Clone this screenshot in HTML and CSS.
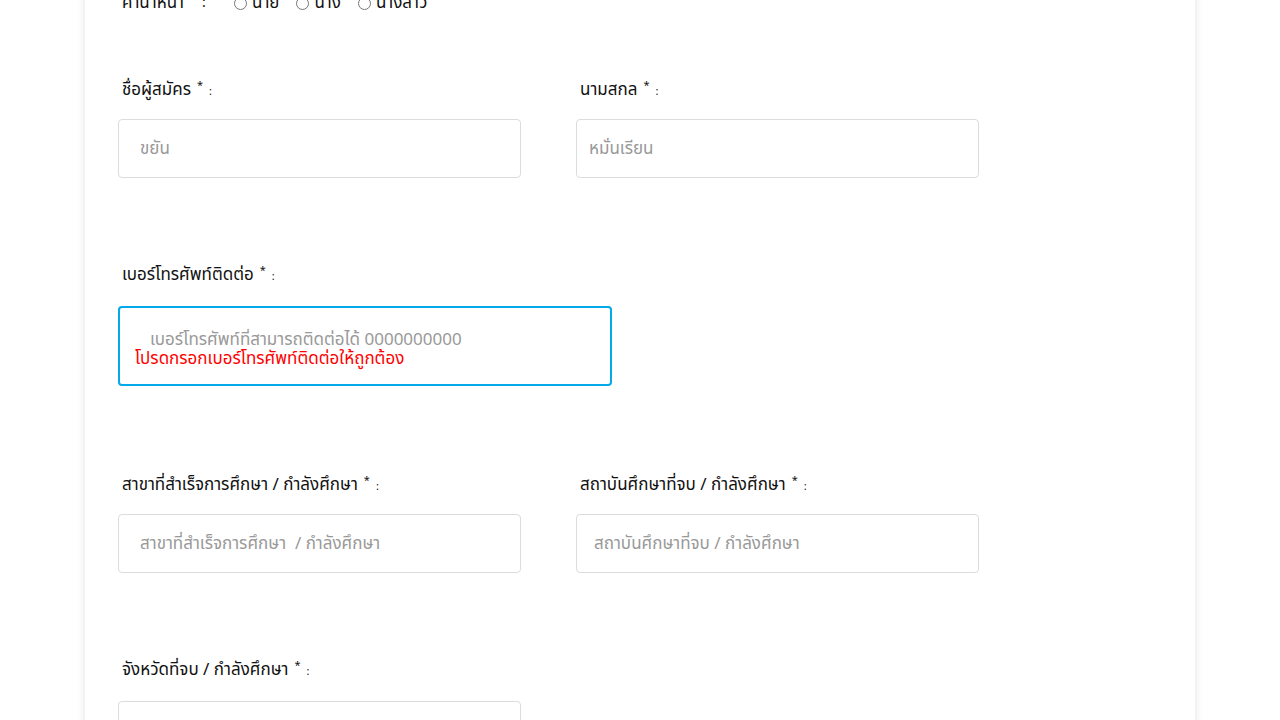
FILE: index.html
```html
<!DOCTYPE html>
<html lang="th">
<head>
<meta charset="utf-8">
<title>ใบสมัคร</title>
<link rel="stylesheet" href="styles.css">
</head>
<body>
<div class="card">
  <div class="title-row">
    <span class="title-label">คำนำหน้า</span>
    <span class="colon">:</span>
    <label class="radio"><input type="radio" name="t"> นาย</label>
    <label class="radio"><input type="radio" name="t"> นาง</label>
    <label class="radio"><input type="radio" name="t"> นางสาว</label>
  </div>

  <div class="row row-first">
    <div class="field">
      <label class="lbl">ชื่อผู้สมัคร<sup>*</sup><small>:</small></label>
      <input class="inp pad-22" type="text" placeholder="ขยัน">
    </div>
    <div class="field">
      <label class="lbl">นามสกล<sup>*</sup><small>:</small></label>
      <input class="inp pad-12" type="text" placeholder="หมั่นเรียน">
    </div>
  </div>

  <div class="row">
    <div class="field field-wide">
      <label class="lbl lbl-tall">เบอร์โทรศัพท์ติดต่อ<sup>*</sup><small>:</small></label>
      <div class="phone-box">
        <input class="phone-inp" type="text" placeholder="เบอร์โทรศัพท์ที่สามารถติดต่อได้ 0000000000">
        <div class="err">โปรดกรอกเบอร์โทรศัพท์ติดต่อให้ถูกต้อง</div>
      </div>
    </div>
  </div>

  <div class="row row-after-phone">
    <div class="field">
      <label class="lbl">สาขาที่สำเร็จการศึกษา / กำลังศึกษา<sup>*</sup><small>:</small></label>
      <input class="inp pad-22" type="text" placeholder="สาขาที่สำเร็จการศึกษา  / กำลังศึกษา">
    </div>
    <div class="field">
      <label class="lbl">สถาบันศึกษาที่จบ / กำลังศึกษา<sup>*</sup><small>:</small></label>
      <input class="inp pad-17" type="text" placeholder="สถาบันศึกษาที่จบ / กำลังศึกษา">
    </div>
  </div>

  <div class="row">
    <div class="field">
      <label class="lbl lbl-tall">จังหวัดที่จบ / กำลังศึกษา<sup>*</sup><small>:</small></label>
      <input class="inp pad-22" type="text">
    </div>
  </div>
</div>
</body>
</html>
```

FILE: styles.css
```css
html, body {
  margin: 0;
  padding: 0;
  background: #fff;
  overflow: hidden;
}
body {
  font-family: "Noto Sans Thai", "Noto Sans", "Open Sans", sans-serif;
  color: #111;
  font-size: 17px;
}
.card {
  width: 1110px;
  margin: 0 auto;
  min-height: 760px;
  background: #fff;
  box-shadow: 0 0 8px rgba(0, 0, 0, 0.12);
  padding: 0 0 0 33px;
  box-sizing: border-box;
}
.title-row {
  display: flex;
  align-items: center;
  height: 24px;
  margin-top: -9px;
  padding-left: 4px;
  line-height: 24px;
}
.title-label { width: 80px; }
.colon { width: 32px; font-size: 14px; }
.radio {
  display: inline-flex;
  align-items: center;
  margin-right: 17px;
}
.radio input {
  margin: 0 5px 0 0;
  width: 13px;
  height: 13px;
}
.row {
  display: grid;
  grid-template-columns: 403px 403px;
  column-gap: 55px;
  margin-top: 83px;
}
.row-first { margin-top: 61px; }
.row-after-phone { margin-top: 85px; }
.field { display: flex; flex-direction: column; }
.field-wide { grid-column: 1 / span 2; }
.lbl {
  display: block;
  height: 28px;
  line-height: 28px;
  padding-left: 4px;
  margin-bottom: 15px;
  font-size: 17px;
}
.lbl-tall { margin-bottom: 17px; }
.lbl sup {
  font-size: 11px;
  vertical-align: 6px;
  line-height: 0;
  margin-left: 6px;
}
.lbl small {
  font-size: 11px;
  line-height: 0;
  margin-left: 6px;
}
.inp {
  box-sizing: border-box;
  height: 59px;
  width: 403px;
  border: 1px solid #dcdcdc;
  border-radius: 4px;
  font-family: inherit;
  font-size: 17px;
  color: #333;
  outline: none;
  padding: 0 12px;
}
.inp::placeholder { color: #999; }
.pad-22 { padding-left: 21px; }
.pad-12 { padding-left: 12px; }
.pad-17 { padding-left: 17px; }
.phone-box {
  box-sizing: border-box;
  width: 494px;
  height: 80px;
  border: 2px solid #03a9e8;
  border-radius: 4px;
  padding: 21px 15px 0 15px;
}
.phone-inp {
  display: block;
  border: none;
  outline: none;
  padding: 0 0 0 15px;
  margin: 0;
  height: 21px;
  width: 100%;
  font-family: inherit;
  font-size: 17px;
}
.phone-inp::placeholder { color: #999; }
.err {
  color: #ff0000;
  font-size: 17px;
  line-height: 20px;
  margin-top: -1px;
}
```
